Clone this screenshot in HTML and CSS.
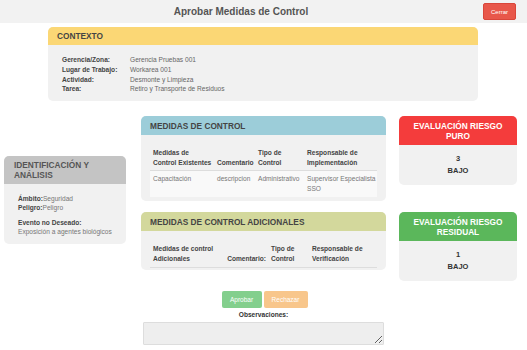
FILE: index.html
```html
<!DOCTYPE html>
<html lang="es">
<head>
  <meta charset="UTF-8">
  <title>Aprobar Medidas de Control</title>
  <link rel="stylesheet" href="styles.css">
</head>
<body>

<div class="topbar">
  <h1>Aprobar Medidas de Control</h1>
  <button class="btn-close">Cerrar</button>
</div>

<div class="card card-context">
  <div class="card-head head-yellow">CONTEXTO</div>
  <div class="card-body">
    <table class="info">
      <tr><th>Gerencia/Zona:</th><td>Gerencia Pruebas 001</td></tr>
      <tr><th>Lugar de Trabajo:</th><td>Workarea 001</td></tr>
      <tr><th>Actividad:</th><td>Desmonte y Limpieza</td></tr>
      <tr><th>Tarea:</th><td>Retiro y Transporte de Residuos</td></tr>
    </table>
  </div>
</div>

<div class="main">
  <div class="col-left">
    <div class="card card-ident">
      <div class="card-head head-gray">IDENTIFICACIÓN Y<br>ANÁLISIS</div>
      <div class="card-body">
        <p><b>Ámbito:</b>Seguridad<br><b>Peligro:</b>Peligro</p>
        <p><b>Evento no Deseado:</b><br>Exposición a agentes biológicos</p>
      </div>
    </div>
  </div>

  <div class="col-mid">
    <div class="card">
      <div class="card-head head-blue">MEDIDAS DE CONTROL</div>
      <div class="card-body">
        <table class="grid grid-1">
          <thead>
            <tr>
              <th>Medidas de<br>Control Existentes</th>
              <th>Comentario</th>
              <th>Tipo de<br>Control</th>
              <th>Responsable de<br>Implementación</th>
            </tr>
          </thead>
          <tbody>
            <tr>
              <td>Capacitación</td>
              <td>descripcion</td>
              <td>Administrativo</td>
              <td>Supervisor Especialista SSO</td>
            </tr>
          </tbody>
        </table>
      </div>
    </div>

    <div class="card">
      <div class="card-head head-olive">MEDIDAS DE CONTROL ADICIONALES</div>
      <div class="card-body">
        <table class="grid grid-2">
          <thead>
            <tr>
              <th>Medidas de control<br>Adicionales</th>
              <th class="right">Comentario:</th>
              <th>Tipo de<br>Control</th>
              <th>Responsable de<br>Verificación</th>
            </tr>
          </thead>
        </table>
      </div>
    </div>
  </div>

  <div class="col-right">
    <div class="card risk">
      <div class="card-head head-red">EVALUACIÓN RIESGO<br>PURO</div>
      <div class="card-body">3<br>BAJO</div>
    </div>
    <div class="card risk">
      <div class="card-head head-green">EVALUACIÓN RIESGO<br>RESIDUAL</div>
      <div class="card-body">1<br>BAJO</div>
    </div>
  </div>
</div>

<div class="actions">
  <div class="buttons">
    <button class="btn btn-ok" disabled>Aprobar</button>
    <button class="btn btn-no" disabled>Rechazar</button>
  </div>
  <label for="obs">Observaciones:</label>
  <textarea id="obs"></textarea>
</div>

</body>
</html>
```

FILE: styles.css
```css
* {
  box-sizing: border-box;
  font-family: "Liberation Sans", Arial, sans-serif;
}

body {
  margin: 0;
  background: #ffffff;
  color: #333;
  font-size: 6.6px;
}

.topbar {
  height: 23px;
  background: #f2f2f2;
  display: flex;
  align-items: center;
  justify-content: center;
  position: relative;
}

.topbar h1 {
  margin: 0 45px 0 0;
  font-size: 10px;
  font-weight: bold;
  color: #555;
}

.btn-close {
  position: absolute;
  right: 11px;
  top: 3px;
  width: 33px;
  height: 17px;
  padding: 0;
  border: 1px solid #d9463a;
  border-radius: 2px;
  background: #e8574a;
  color: #fff;
  font-size: 6px;
}

.card {
  background: #f1f1f1;
  border-radius: 5px;
  overflow: hidden;
}

.card-head {
  font-weight: bold;
  font-size: 8.3px;
  color: #444;
  padding: 0 9px;
  display: flex;
  align-items: center;
}

.head-yellow { background: #fbd775; height: 18px; }
.head-blue { background: #9ccdd9; height: 19px; }
.head-olive { background: #d3d89c; height: 19px; }
.head-gray { background: #c4c4c4; height: 28px; line-height: 10px; padding: 0 10px; color: #555; }

.head-red,
.head-green {
  color: #fff;
  justify-content: center;
  text-align: center;
  height: 29px;
  line-height: 10px;
  padding: 0 6px;
}

.head-red { background: #f43c3c; }
.head-green { background: #5bb75b; }

.card-context {
  margin: 4px 49px 0 48px;
  height: 74px;
}

.card-context .card-body {
  padding: 10px 14px;
}

.info {
  border-collapse: collapse;
}

.info th {
  text-align: left;
  font-weight: bold;
  color: #444;
  padding: 0;
  width: 68px;
  height: 9.7px;
  line-height: 9px;
}

.info td {
  color: #666;
  padding: 0;
  line-height: 9px;
}

.main {
  display: grid;
  grid-template-columns: 122px 247px 118px;
  column-gap: 13px;
  margin: 15px 10px 0 4px;
}

.col-left .card-ident {
  margin-top: 40px;
  height: 88px;
}

.card-ident .card-body {
  padding: 10px 14px;
  color: #777;
}

.card-ident p {
  margin: 0 0 5px;
  line-height: 9.3px;
}

.card-ident b {
  color: #444;
}

.col-mid {
  margin-left: 2px;
  display: flex;
  flex-direction: column;
  gap: 11px;
}

.col-mid .card-body {
  padding: 9px 9px 10px;
}

.col-mid .card:first-child {
  height: 85px;
}

.col-mid .card:last-child {
  height: 58px;
}

.grid {
  width: 100%;
  border-collapse: collapse;
  table-layout: fixed;
}

.grid th {
  text-align: left;
  vertical-align: bottom;
  font-weight: bold;
  color: #444;
  white-space: nowrap;
  line-height: 9.5px;
  padding: 4px 2px 3px 3px;
  border-bottom: 1px solid #ddd;
}

.grid td {
  vertical-align: top;
  color: #777;
  line-height: 9.5px;
  padding: 3px 1px 4px 3px;
  background: #f9f9f9;
}

.grid-1 th:nth-child(1) { width: 64px; }
.grid-1 th:nth-child(2) { width: 41px; }
.grid-1 th:nth-child(3) { width: 49px; }

.grid-2 th:nth-child(1) { width: 74px; }
.grid-2 th:nth-child(2) { width: 44px; }
.grid-2 th:nth-child(3) { width: 41px; }
.grid-2 th { padding-bottom: 4px; }

.right {
  text-align: right !important;
}

.col-right {
  display: flex;
  flex-direction: column;
  gap: 27px;
}

.risk {
  height: 69px;
}

.risk .card-body {
  text-align: center;
  font-size: 7.5px;
  font-weight: bold;
  color: #333;
  line-height: 12px;
  padding-top: 8px;
}

.actions {
  width: 241px;
  margin: 10px 0 0 143px;
  text-align: center;
}

.buttons {
  display: flex;
  justify-content: center;
  gap: 2px;
  margin-left: 2px;
}

.btn {
  height: 17px;
  border: none;
  border-radius: 2px;
  color: #fff;
  font-size: 6.5px;
  padding: 0;
}

.btn-ok { background: #83cf8d; width: 40px; }
.btn-no { background: #f8c68b; width: 44px; }

.actions label {
  display: block;
  font-weight: bold;
  color: #333;
  margin: 2px 0 3px;
  line-height: 9px;
}

.actions textarea {
  width: 241px;
  height: 23px;
  display: block;
  background: #eeeeee;
  border: 1px solid #ddd;
  border-radius: 1px;
}
```
